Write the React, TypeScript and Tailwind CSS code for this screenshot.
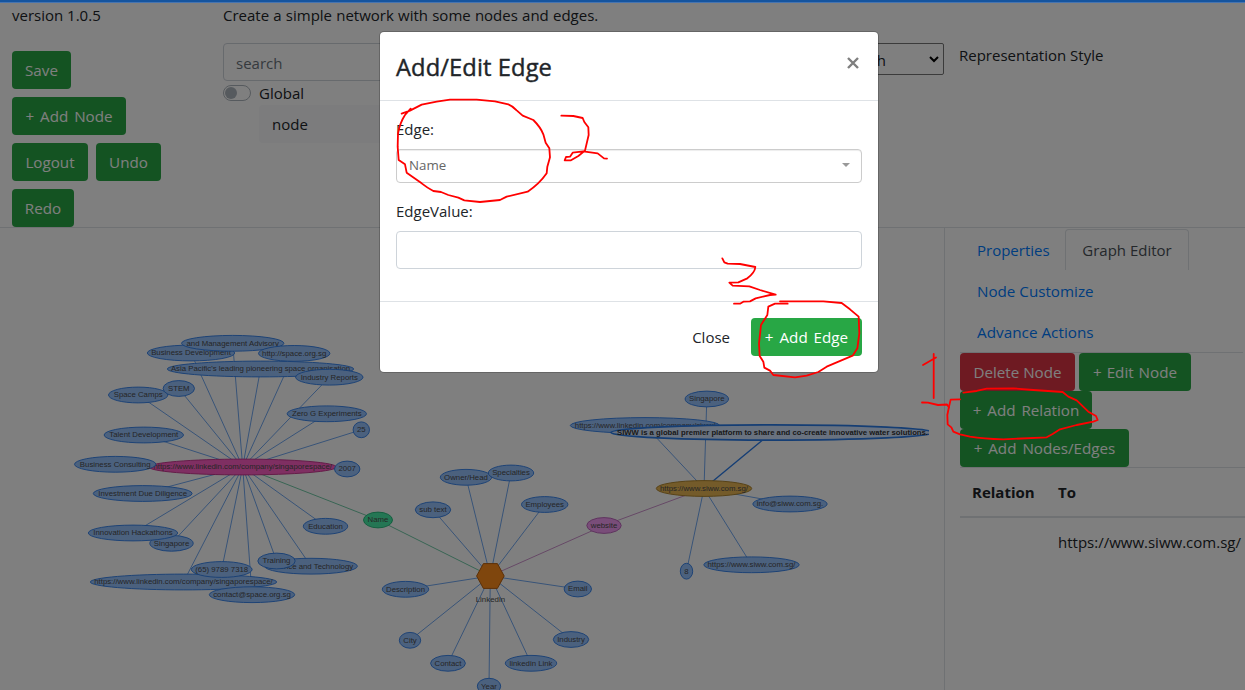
import React from "react";

type Kind = "blue" | "pink" | "green" | "violet" | "gold";

interface GraphNode {
  label: string;
  x: number;
  y: number;
  rx: number;
  kind?: Kind;
}

const colors: Record<Kind, { fill: string; stroke: string }> = {
  blue: { fill: "#97c2fc", stroke: "#2b7ce9" },
  pink: { fill: "#ff5fc4", stroke: "#c22c88" },
  green: { fill: "#48eca8", stroke: "#20b878" },
  violet: { fill: "#f39bf3", stroke: "#b45cb4" },
  gold: { fill: "#e8b654", stroke: "#a87c20" },
};

const company = { x: 242.7, y: 467 };
const hub = { x: 490.3, y: 576 };
const site = { x: 704, y: 488.5 };

const companyNodes: GraphNode[] = [
  { label: "Business Development", x: 191, y: 353, rx: 44 },
  { label: "and Management Advisory", x: 232.7, y: 343.3, rx: 51.5 },
  { label: "Asia Pacific's leading pioneering space organisation", x: 260.5, y: 369, rx: 93.5 },
  { label: "http://space.org.sg", x: 294.2, y: 353.4, rx: 36 },
  { label: "Industry Reports", x: 329.3, y: 377.2, rx: 34 },
  { label: "Space Camps", x: 138.2, y: 395, rx: 30 },
  { label: "STEM", x: 178.8, y: 388.5, rx: 16 },
  { label: "Zero G Experiments", x: 326.8, y: 413.8, rx: 40 },
  { label: "25", x: 361.3, y: 429.8, rx: 8.5 },
  { label: "Talent Development", x: 143.8, y: 435, rx: 40 },
  { label: "Business Consulting", x: 115.2, y: 464.3, rx: 41 },
  { label: "2007", x: 347.2, y: 469, rx: 13 },
  { label: "Investment Due Diligence", x: 142.7, y: 493.5, rx: 49.7 },
  { label: "Singapore", x: 171.5, y: 543.3, rx: 22 },
  { label: "Innovation Hackathons", x: 133, y: 533, rx: 45 },
  { label: "https://www.linkedin.com/company/singaporespace/", x: 183.5, y: 582, rx: 93.5 },
  { label: "(65) 9789 7318", x: 221.7, y: 569.5, rx: 30.7 },
  { label: "contact@space.org.sg", x: 252, y: 594.7, rx: 43 },
  { label: "Science and Technology", x: 311, y: 566.2, rx: 46.7 },
  { label: "Training", x: 276.5, y: 561, rx: 19 },
  { label: "Education", x: 325.5, y: 526.3, rx: 22.5 },
];

const hubNodes: GraphNode[] = [
  { label: "Owner/Head", x: 466, y: 477.3, rx: 26 },
  { label: "Specialties", x: 511, y: 473, rx: 23 },
  { label: "Employees", x: 544.7, y: 504.5, rx: 23.5 },
  { label: "sub text", x: 433, y: 509.8, rx: 18 },
  { label: "Description", x: 405.5, y: 589.3, rx: 23.5 },
  { label: "City", x: 410, y: 640.3, rx: 11 },
  { label: "Contact", x: 448, y: 663.3, rx: 17.7 },
  { label: "Year", x: 489, y: 686.2, rx: 12 },
  { label: "linkedin Link", x: 531, y: 663.3, rx: 26 },
  { label: "Industry", x: 571, y: 639.5, rx: 18 },
  { label: "Email", x: 577.8, y: 589, rx: 14 },
];

const siteNodes: GraphNode[] = [
  { label: "Singapore", x: 706.8, y: 399, rx: 22 },
  { label: "https://www.linkedin.com/company/siww/", x: 645, y: 425.5, rx: 75 },
  { label: "info@siww.com.sg.", x: 790, y: 504, rx: 37.5 },
  { label: "https://www.siww.com.sg/", x: 751.5, y: 564.8, rx: 48 },
  { label: "8", x: 686.5, y: 571.2, rx: 6.5 },
];

const nameNode: GraphNode = { label: "Name", x: 378, y: 520, rx: 14.8, kind: "green" };
const websiteNode: GraphNode = { label: "website", x: 604, y: 525.5, rx: 17.5, kind: "violet" };
const companyNode: GraphNode = {
  label: "https://www.linkedin.com/company/singaporespace/",
  ...company,
  rx: 94,
  kind: "pink",
};
const siteNode: GraphNode = { label: "https://www.siww.com.sg/", ...site, rx: 48, kind: "gold" };

function Ellipse({ node }: { node: GraphNode }) {
  const c = colors[node.kind ?? "blue"];
  return (
    <g>
      <ellipse cx={node.x} cy={node.y} rx={node.rx - 0.3} ry={7.9} fill={c.fill} stroke={c.stroke} strokeWidth={0.9} />
      <text x={node.x} y={node.y + 2.3} textAnchor="middle" fill="#4c4c4c" fontSize={7.8}>
        {node.label}
      </text>
    </g>
  );
}

interface Point {
  x: number;
  y: number;
}

function Edges({ from, to, stroke }: { from: Point; to: Point[]; stroke: string }) {
  return (
    <g stroke={stroke} strokeWidth={0.8} strokeOpacity={0.85}>
      {to.map((p, i) => (
        <line key={i} x1={from.x} y1={from.y} x2={p.x} y2={p.y} />
      ))}
    </g>
  );
}

function NetworkGraph() {
  return (
    <svg width="929" height="462" viewBox="0 228 929 462" className="block font-['Liberation_Sans',Arial,sans-serif]">
      <Edges from={company} to={companyNodes} stroke="#2b7ce9" />
      <Edges from={hub} to={hubNodes} stroke="#2b7ce9" />
      <Edges from={site} to={siteNodes} stroke="#2b7ce9" />
      <Edges from={nameNode} to={[company, hub]} stroke="#2cb07c" />
      <Edges from={websiteNode} to={[site, hub]} stroke="#b45cb4" />
      <line x1={site.x} y1={site.y} x2={772} y2={432.3} stroke="#2b7ce9" strokeWidth={1.4} />

      <Ellipse node={companyNode} />
      {companyNodes.map((n) => (
        <Ellipse key={n.label} node={n} />
      ))}
      <Ellipse node={nameNode} />
      <Ellipse node={websiteNode} />
      {hubNodes.map((n) => (
        <Ellipse key={n.label} node={n} />
      ))}
      <polygon
        points="476.6,576 483.4,563.6 497.4,563.6 504.2,576 497.4,588.4 483.4,588.4"
        fill="#ff8c1a"
        stroke="#b86010"
        strokeWidth={1}
      />
      <text x={490.4} y={602} textAnchor="middle" fontSize={7.9} fill="#4c4c4c">
        Linkedin
      </text>
      {siteNodes.map((n) => (
        <Ellipse key={n.label} node={n} />
      ))}
      <Ellipse node={siteNode} />
      <ellipse cx={772.5} cy={432.5} rx={161.5} ry={7.6} fill="#d2e5ff" stroke="#2b7ce9" strokeWidth={1.8} />
      <text
        x={772.5}
        y={435}
        textAnchor="middle"
        fontSize={7.7}
        fontWeight={700}
        fill="#343434"
        textLength={311}
        lengthAdjust="spacing"
      >
        SIWW is a global premier platform to share and co-create innovative water solutions.
      </text>
    </svg>
  );
}

function Button({ className, children }: { className: string; children: React.ReactNode }) {
  return (
    <button
      className={`flex h-[38px] shrink-0 items-center justify-center whitespace-nowrap rounded text-[15.2px] text-white ${className}`}
    >
      {children}
    </button>
  );
}

function Header() {
  return (
    <header className="flex h-[228px] border-b border-[#dee2e6] bg-white pt-[3px]">
      <div className="w-[223px] shrink-0 pl-3">
        <p className="leading-6">version 1.0.5</p>
        <div className="mt-6 flex flex-col items-start gap-2">
          <Button className="w-[59px] bg-[#28a745]">Save</Button>
          <Button className="w-[114px] bg-[#28a745] [word-spacing:2px]">+ Add Node</Button>
          <div className="flex gap-2">
            <Button className="w-[76px] bg-[#28a745]">Logout</Button>
            <Button className="w-[65px] bg-[#28a745]">Undo</Button>
          </div>
          <Button className="w-[62px] bg-[#28a745]">Redo</Button>
        </div>
      </div>
      <div className="w-[500px] shrink-0">
        <p className="leading-6 [word-spacing:0.3px]">Create a simple network with some nodes and edges.</p>
        <div className="mt-4 flex h-[38px] items-center rounded border border-[#ced4da] px-3 pt-0.5 text-[#6c757d]">
          search
        </div>
        <div className="mt-1 flex h-4 items-center">
          <span className="flex h-4 w-7 items-center rounded-full border border-[#adb5bd] px-px">
            <span className="size-3 rounded-full bg-[#adb5bd]" />
          </span>
          <span className="ml-2">Global</span>
        </div>
        <div className="ml-9 mt-1 flex h-[38px] items-center rounded bg-[#f8f9fa] px-[13px]">node</div>
      </div>
      <div className="flex pt-10">
        <div className="flex h-8 w-[221px] items-center justify-between rounded-[2px] border border-[#767676] pr-1">
          <span className="w-[162px] pt-0.5 text-right">Graph</span>
          <svg width="10" height="8" viewBox="0 0 10 8" fill="none" stroke="#000" strokeWidth="2">
            <path d="M1 2l4 4 4-4" />
          </svg>
        </div>
        <span className="ml-[15px] leading-6">Representation Style</span>
      </div>
    </header>
  );
}

function SidePanel() {
  return (
    <aside className="h-[462px] w-[301px] shrink-0 border-l border-[#dee2e6] pl-[15px] pt-px">
      <nav className="flex h-[124px] w-[283px] flex-col items-start border-b border-[#dee2e6] text-[#007bff]">
        <div className="flex h-[41px]">
          <a className="flex w-[105px] items-center pl-[17px] pt-0.5">Properties</a>
          <a className="flex w-[124px] items-center justify-center rounded-t border border-b-0 border-[#dee2e6] pt-px text-[#495057]">
            Graph Editor
          </a>
        </div>
        <a className="flex h-[41px] items-center pl-[17px] pt-0.5 text-[15.2px]">Node Customize</a>
        <a className="flex h-[41px] items-center pl-[17px] pt-0.5 text-[15.3px]">Advance Actions</a>
      </nav>
      <div className="flex gap-1">
        <Button className="w-[115px] bg-[#dc3545]">Delete Node</Button>
        <Button className="w-[112px] bg-[#28a745] [word-spacing:1px]">+ Edit Node</Button>
      </div>
      <Button className="w-[132px] bg-[#28a745] [word-spacing:2px]">+ Add Relation</Button>
      <Button className="w-[169px] bg-[#28a745] [word-spacing:2px]">+ Add Nodes/Edges</Button>
      <table className="w-full">
        <thead>
          <tr className="h-[49px] border-b-2 border-t border-[#dee2e6] text-left">
            <th className="w-[86px] pl-3 font-bold">Relation</th>
            <th className="pl-3 font-bold">To</th>
          </tr>
        </thead>
        <tbody>
          <tr className="h-[50px]">
            <td />
            <td className="pl-3">https://www.siww.com.sg/</td>
          </tr>
        </tbody>
      </table>
    </aside>
  );
}

function EdgeDialog() {
  return (
    <div
      role="dialog"
      className="absolute left-[380px] top-8 h-[340px] w-[498px] rounded-[4px] bg-white shadow-[0_0_0_1px_rgba(0,0,0,0.2)]"
    >
      <div className="flex h-[69px] items-center justify-between border-b border-[#dee2e6] px-4">
        <h5 className="pt-[3px] text-[23.7px] font-medium tracking-[0.1px] [-webkit-text-stroke:0.4px_#212529]">
          Add/Edit Edge
        </h5>
        <svg width="12" height="12" viewBox="0 0 12 12" stroke="#7f7f7f" strokeWidth="2.4" className="mr-[3px] mt-[-6px]">
          <path d="M1 1l10 10M11 1L1 11" />
        </svg>
      </div>
      <div className="h-[200px] px-4 pt-4">
        <label className="block leading-6">Edge:</label>
        <div className="mt-2 flex h-[34px] items-center justify-between rounded border border-[#ccc] pl-3 pr-[11px] text-[13.3px] text-[#666] shadow-[inset_0_1px_1px_rgba(0,0,0,0.075)]">
          <span>Name</span>
          <svg width="8" height="4" viewBox="0 0 8 4" fill="#999" className="-mt-0.5">
            <path d="M0 0h8L4 4z" />
          </svg>
        </div>
        <label className="mt-4 block leading-6">EdgeValue:</label>
        <div className="mt-2 h-[38px] rounded border border-[#ced4da]" />
      </div>
      <div className="flex h-[71px] items-center justify-end border-t border-[#dee2e6] px-4">
        <button className="mr-[21px]">Close</button>
        <Button className="w-[111px] bg-[#28a745] [word-spacing:2px]">+ Add Edge</Button>
      </div>
    </div>
  );
}

function InkMarks() {
  return (
    <svg
      width="1245"
      height="690"
      viewBox="0 0 1245 690"
      fill="none"
      stroke="#ff0000"
      strokeWidth="1.8"
      strokeLinecap="round"
      strokeLinejoin="round"
      className="pointer-events-none absolute inset-0"
    >
      <g transform="translate(370 20) scale(0.33333)" strokeWidth="5.4">
        <path d="M95 281L120 272L155 254L200 245L240 239L320 239L375 244L415 253Q428 258 440 271L458 287L490 300Q512 322 520 343L527 368L538 385L540 412L532 440L530 460Q508 492 473 515L410 530L390 540L330 546L283 541L265 533L235 525L213 516L190 513Q170 502 155 490L110 458L105 433L86 420L83 380L84 340Q90 308 105 285L122 266" />
        <path d="M574 287L610 288L638 294L643 306L655 322L656 345L645 392L625 408L603 421L584 421L588 411L600 410L608 398L640 394L683 400L702 415L711 416" />
      </g>
      <g transform="translate(660 200) scale(0.33333)" strokeWidth="5.4">
        <path d="M187 175L193 187L203 191L240 192L286 201Q285 217 262 235L235 247L208 248L218 257L268 259L300 270L347 284L330 285L287 295L270 304L250 305L240 311L222 311" />
        <path d="M383 311L345 311L325 320L322 345L303 375L297 430L299 468L310 485L313 503L330 512L340 525L405 532L440 527L475 516L500 500L578 467L592 445L598 400L596 350L570 328L545 309L490 304L360 304" />
      </g>
      <path d="M923 365L936 357.5M933.7 354V398M922 402.5L928 402.7L938 405L947 404.5L949 407.5" />
      <g transform="translate(930 220) scale(0.33333)" strokeWidth="5.4">
        <path d="M90 538L62 539L57 560L52 585L53 613L64 622L70 635L90 643L120 650Q160 657 220 658L350 652L368 642L390 628L440 615L490 605L503 600L498 588L475 575L440 541L415 530L398 516L310 510L250 505L170 506L140 513L100 518" />
      </g>
    </svg>
  );
}

export default function App() {
  return (
    <div className="relative h-[690px] w-[1245px] overflow-hidden bg-white font-['Open_Sans','Noto_Sans',sans-serif] text-[15px] text-[#212529]">
      <Header />
      <main className="flex">
        <div className="w-[944px] shrink-0 overflow-hidden">
          <NetworkGraph />
        </div>
        <SidePanel />
      </main>
      <div className="absolute inset-0 bg-black/50" />
      <div className="absolute inset-x-0 top-0 h-[3px] border-b border-[#4674b0] bg-[#14549f]" />
      <EdgeDialog />
      <InkMarks />
    </div>
  );
}
